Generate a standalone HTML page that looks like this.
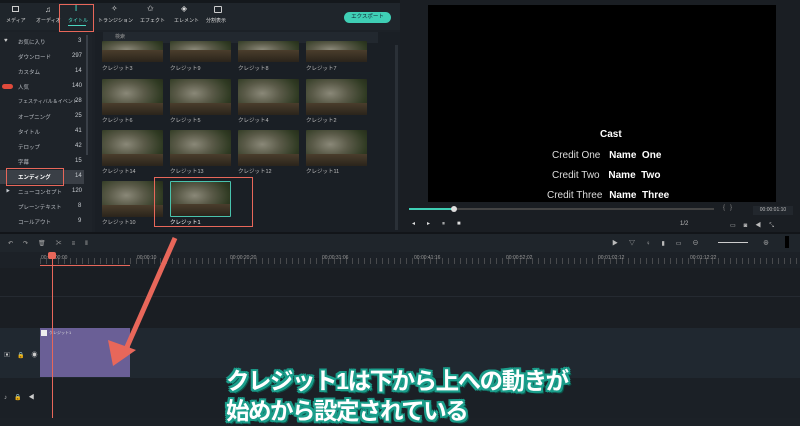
<!DOCTYPE html><html><head><meta charset="utf-8"><style>
*{margin:0;padding:0;box-sizing:border-box}
body{width:800px;height:418px;background:#1c2127;font-family:"Liberation Sans","Noto Sans CJK JP",sans-serif;color:#c9cdd2;position:relative;overflow:hidden;font-size:6px}
.a{position:absolute}
.tab{position:absolute;top:17px;font-size:5px;color:#ddd;white-space:nowrap}
.th{position:absolute;width:61px;height:36px;background:radial-gradient(ellipse at 40% 40%,#8a8878 0%,#5a5a48 35%,#2f3a22 70%,#1c2014 100%);border-radius:1px}
.th::after{content:"";position:absolute;left:0;right:0;bottom:0;height:12px;background:linear-gradient(#4a3d2c,#2a241b)}
.lbl{position:absolute;font-size:5.5px;color:#bbb;white-space:nowrap}
.cat{position:absolute;left:18px;font-size:5.5px;color:#b8bcc2;white-space:nowrap}
.cap{position:absolute;left:226px;font-size:23.5px;font-weight:bold;color:#fff;letter-spacing:-1.5px;white-space:nowrap;text-shadow:2px 0 #1a9d8a,-2px 0 #1a9d8a,0 2px #1a9d8a,0 -2px #1a9d8a,2px 2px #1a9d8a,-2px -2px #1a9d8a,2px -2px #1a9d8a,-2px 2px #1a9d8a,3px 3px #0d5248}
</style></head><body>
<div class="a" style="left:0;top:0;width:400px;height:30px;background:#1f252b"></div>
<div class="a" style="left:0;top:0;width:800px;height:3px;background:#14181c"></div>
<div class="tab" style="left:6px">メディア</div>
<div class="tab" style="left:36px">オーディオ</div>
<div class="tab" style="left:68px;color:#4ad6c0">タイトル</div>
<div class="tab" style="left:98px">トランジション</div>
<div class="tab" style="left:140px">エフェクト</div>
<div class="tab" style="left:174px">エレメント</div>
<div class="tab" style="left:206px">分割表示</div>
<div class="a" style="left:12px;top:6px;width:7px;height:6px;border:1px solid #ccc"></div>
<div class="a" style="left:45px;top:5px;color:#ddd;font-size:8px">♫</div>
<div class="a" style="left:73px;top:3px;color:#4ad6c0;font-size:10px">T</div>
<div class="a" style="left:111px;top:4px;color:#ddd;font-size:8px">✧</div>
<div class="a" style="left:147px;top:4px;color:#ddd;font-size:8px">✩</div>
<div class="a" style="left:181px;top:4px;color:#ddd;font-size:8px">◈</div>
<div class="a" style="left:214px;top:6px;width:8px;height:7px;border:1px solid #ccc;border-radius:1px"></div>
<div class="a" style="left:68px;top:25px;width:18px;height:1px;background:#4ad6c0"></div>
<div class="a" style="left:59px;top:4px;width:35px;height:28px;border:1.5px solid #e8675a"></div>
<div class="a" style="left:344px;top:12px;width:47px;height:11px;border-radius:6px;background:#3fcfb5;color:#123;text-align:center;line-height:11px;font-size:5.5px">エクスポート</div>
<div class="a" style="left:0;top:32px;width:92px;height:200px;background:#1e2329"></div>
<div class="a" style="left:86px;top:35px;width:2px;height:120px;background:#3a4048"></div>
<div class="a" style="left:4px;top:38px;color:#ccc;font-size:6px">♥</div>
<div class="cat" style="top:38px">お気に入り</div><div class="a" style="left:78px;top:38px">3</div>
<div class="cat" style="top:53px">ダウンロード</div><div class="a" style="left:72px;top:53px">297</div>
<div class="cat" style="top:68px">カスタム</div><div class="a" style="left:75px;top:68px">14</div>
<div class="a" style="left:2px;top:84px;width:11px;height:5px;background:#e04a3b;border-radius:3px"></div>
<div class="cat" style="top:83px">人気</div><div class="a" style="left:72px;top:83px">140</div>
<div class="cat" style="top:98px;font-size:5px">フェスティバル＆イベント</div><div class="a" style="left:75px;top:98px">28</div>
<div class="cat" style="top:113px">オープニング</div><div class="a" style="left:75px;top:113px">25</div>
<div class="cat" style="top:128px">タイトル</div><div class="a" style="left:75px;top:128px">41</div>
<div class="cat" style="top:143px">テロップ</div><div class="a" style="left:75px;top:143px">42</div>
<div class="cat" style="top:158px">字幕</div><div class="a" style="left:75px;top:158px">15</div>
<div class="a" style="left:0;top:170px;width:84px;height:14px;background:#3a3f46"></div>
<div class="cat" style="top:173px;color:#fff;font-weight:bold">エンディング</div><div class="a" style="left:75px;top:173px">14</div>
<div class="a" style="left:6px;top:168px;width:58px;height:18px;border:1.5px solid #e8675a"></div>
<div class="a" style="left:6px;top:188px;font-size:4px">▶</div>
<div class="cat" style="top:188px">ニューコンセプト</div><div class="a" style="left:72px;top:188px">120</div>
<div class="cat" style="top:203px">プレーンテキスト</div><div class="a" style="left:78px;top:203px">8</div>
<div class="cat" style="top:218px">コールアウト</div><div class="a" style="left:78px;top:218px">9</div>
<div class="a" style="left:95px;top:32px;width:305px;height:200px;background:#1a1f25"></div>
<div class="a" style="left:103px;top:32px;width:275px;height:11px;background:#22282f;color:#999;padding-left:12px;line-height:11px;font-size:5px">検索</div>
<div class="a" style="left:395px;top:45px;width:3px;height:185px;background:#2a3037"></div>
<div class="th" style="left:102px;top:41px;height:21px"></div><div class="th" style="left:170px;top:41px;height:21px"></div><div class="th" style="left:238px;top:41px;height:21px"></div><div class="th" style="left:306px;top:41px;height:21px"></div>
<div class="lbl" style="left:102px;top:64px">クレジット3</div><div class="lbl" style="left:170px;top:64px">クレジット9</div><div class="lbl" style="left:238px;top:64px">クレジット8</div><div class="lbl" style="left:306px;top:64px">クレジット7</div>
<div class="th" style="left:102px;top:79px"></div><div class="th" style="left:170px;top:79px"></div><div class="th" style="left:238px;top:79px"></div><div class="th" style="left:306px;top:79px"></div>
<div class="lbl" style="left:102px;top:116px">クレジット6</div><div class="lbl" style="left:170px;top:116px">クレジット5</div><div class="lbl" style="left:238px;top:116px">クレジット4</div><div class="lbl" style="left:306px;top:116px">クレジット2</div>
<div class="th" style="left:102px;top:130px"></div><div class="th" style="left:170px;top:130px"></div><div class="th" style="left:238px;top:130px"></div><div class="th" style="left:306px;top:130px"></div>
<div class="lbl" style="left:102px;top:167px">クレジット14</div><div class="lbl" style="left:170px;top:167px">クレジット13</div><div class="lbl" style="left:238px;top:167px">クレジット12</div><div class="lbl" style="left:306px;top:167px">クレジット11</div>
<div class="th" style="left:102px;top:181px"></div><div class="th" style="left:170px;top:181px;border:1px solid #49c2ad"></div>
<div class="lbl" style="left:102px;top:218px">クレジット10</div><div class="lbl" style="left:170px;top:218px;color:#fff">クレジット1</div>
<div class="a" style="left:154px;top:177px;width:99px;height:50px;border:1.5px solid #e8675a"></div>
<div class="a" style="left:400px;top:0;width:400px;height:232px;background:#1a1e23"></div>
<div class="a" style="left:428px;top:5px;width:348px;height:197px;background:#000"></div>
<div class="a" style="left:600px;top:129px;color:#fff;font-weight:bold;font-size:10px">Cast</div>
<div class="a" style="left:552px;top:150px;color:#ddd;font-size:10px;white-space:nowrap">Credit One <b style="color:#fff;margin-left:6px">Name&nbsp; One</b></div>
<div class="a" style="left:552px;top:170px;color:#ddd;font-size:10px;white-space:nowrap">Credit Two <b style="color:#fff;margin-left:6px">Name&nbsp; Two</b></div>
<div class="a" style="left:547px;top:190px;color:#ddd;font-size:10px;white-space:nowrap">Credit Three <b style="color:#fff;margin-left:4px">Name&nbsp; Three</b></div>
<div class="a" style="left:409px;top:208px;width:305px;height:2px;background:#444"></div>
<div class="a" style="left:409px;top:208px;width:45px;height:2px;background:#3fcfb5"></div>
<div class="a" style="left:451px;top:206px;width:6px;height:6px;border-radius:50%;background:#ddd"></div>
<div class="a" style="left:723px;top:205px;color:#888">{ &nbsp; }</div>
<div class="a" style="left:753px;top:206px;width:40px;height:9px;background:#22272d;color:#bbb;font-size:5px;line-height:9px;text-align:center">00:00:01:10</div>
<div class="a" style="left:412px;top:220px;color:#ddd;font-size:6px;letter-spacing:12px">◂▸⏸■</div>
<div class="a" style="left:680px;top:221px;color:#bbb">1/2</div>
<div class="a" style="left:730px;top:220px;color:#bbb;letter-spacing:8px">▭◙◀⤡</div>
<div class="a" style="left:0;top:232px;width:800px;height:2px;background:#121519"></div>
<div class="a" style="left:0;top:234px;width:800px;height:18px;background:#1f252b"></div>
<div class="a" style="left:8px;top:238px;color:#aaa;letter-spacing:10px">↶↷🗑✂≡⫴</div>
<div class="a" style="left:612px;top:238px;color:#bbb;letter-spacing:11px">▶▽♀▮▭⊖</div>
<div class="a" style="left:718px;top:242px;width:30px;height:1px;background:#ccc"></div>
<div class="a" style="left:763px;top:238px;color:#bbb">⊕</div>
<div class="a" style="left:785px;top:236px;width:4px;height:12px;background:#000"></div>
<div class="a" style="left:0;top:252px;width:800px;height:16px;background:#1c2127"></div>
<div class="a" style="left:0;top:268px;width:800px;height:60px;background:#1a1e23"></div>
<div class="a" style="left:0;top:296px;width:800px;height:1px;background:#252a31"></div>
<div class="a" style="left:0;top:328px;width:800px;height:50px;background:#202830"></div>
<div class="a" style="left:0;top:378px;width:800px;height:40px;background:#1b2026"></div>
<div class="a" style="left:40px;top:258px;width:760px;height:6px;background:repeating-linear-gradient(90deg,#666 0 1px,transparent 1px 6px);opacity:.6"></div>
<div class="a" style="left:41px;top:255px;color:#999;font-size:5px">00:00:00:00</div>
<div class="a" style="left:137px;top:255px;color:#999;font-size:5px">00:00:10</div>
<div class="a" style="left:230px;top:255px;color:#999;font-size:5px">00:00:20:20</div>
<div class="a" style="left:322px;top:255px;color:#999;font-size:5px">00:00:31:06</div>
<div class="a" style="left:414px;top:255px;color:#999;font-size:5px">00:00:41:16</div>
<div class="a" style="left:506px;top:255px;color:#999;font-size:5px">00:00:52:02</div>
<div class="a" style="left:598px;top:255px;color:#999;font-size:5px">00:01:02:12</div>
<div class="a" style="left:690px;top:255px;color:#999;font-size:5px">00:01:12:22</div>
<div class="a" style="left:40px;top:265px;width:90px;height:1px;background:#e8675a"></div>
<div class="a" style="left:40px;top:328px;width:90px;height:49px;background:#6a5f96"></div>
<div class="a" style="left:41px;top:330px;width:6px;height:6px;background:#eee"></div>
<div class="a" style="left:49px;top:330px;color:#ddd;font-size:4px">クレジット1</div>
<div class="a" style="left:52px;top:252px;width:1px;height:166px;background:#e8675a"></div>
<div class="a" style="left:48px;top:252px;width:8px;height:7px;background:#e8675a;border-radius:2px"></div>
<div class="a" style="left:4px;top:350px;color:#ccc;letter-spacing:7px">▣🔒◉</div>
<div class="a" style="left:4px;top:392px;color:#ccc;letter-spacing:7px">♪🔒◀</div>
<svg class="a" style="left:0;top:0" width="800" height="418"><line x1="175" y1="238" x2="123" y2="356" stroke="#e8675a" stroke-width="5"/><polygon points="113,366 108,340 136,350" fill="#e8675a"/></svg>
<div class="cap" style="top:362px">クレジット1は下から上への動きが</div>
<div class="cap" style="top:392px">始めから設定されている</div>
</body></html>
